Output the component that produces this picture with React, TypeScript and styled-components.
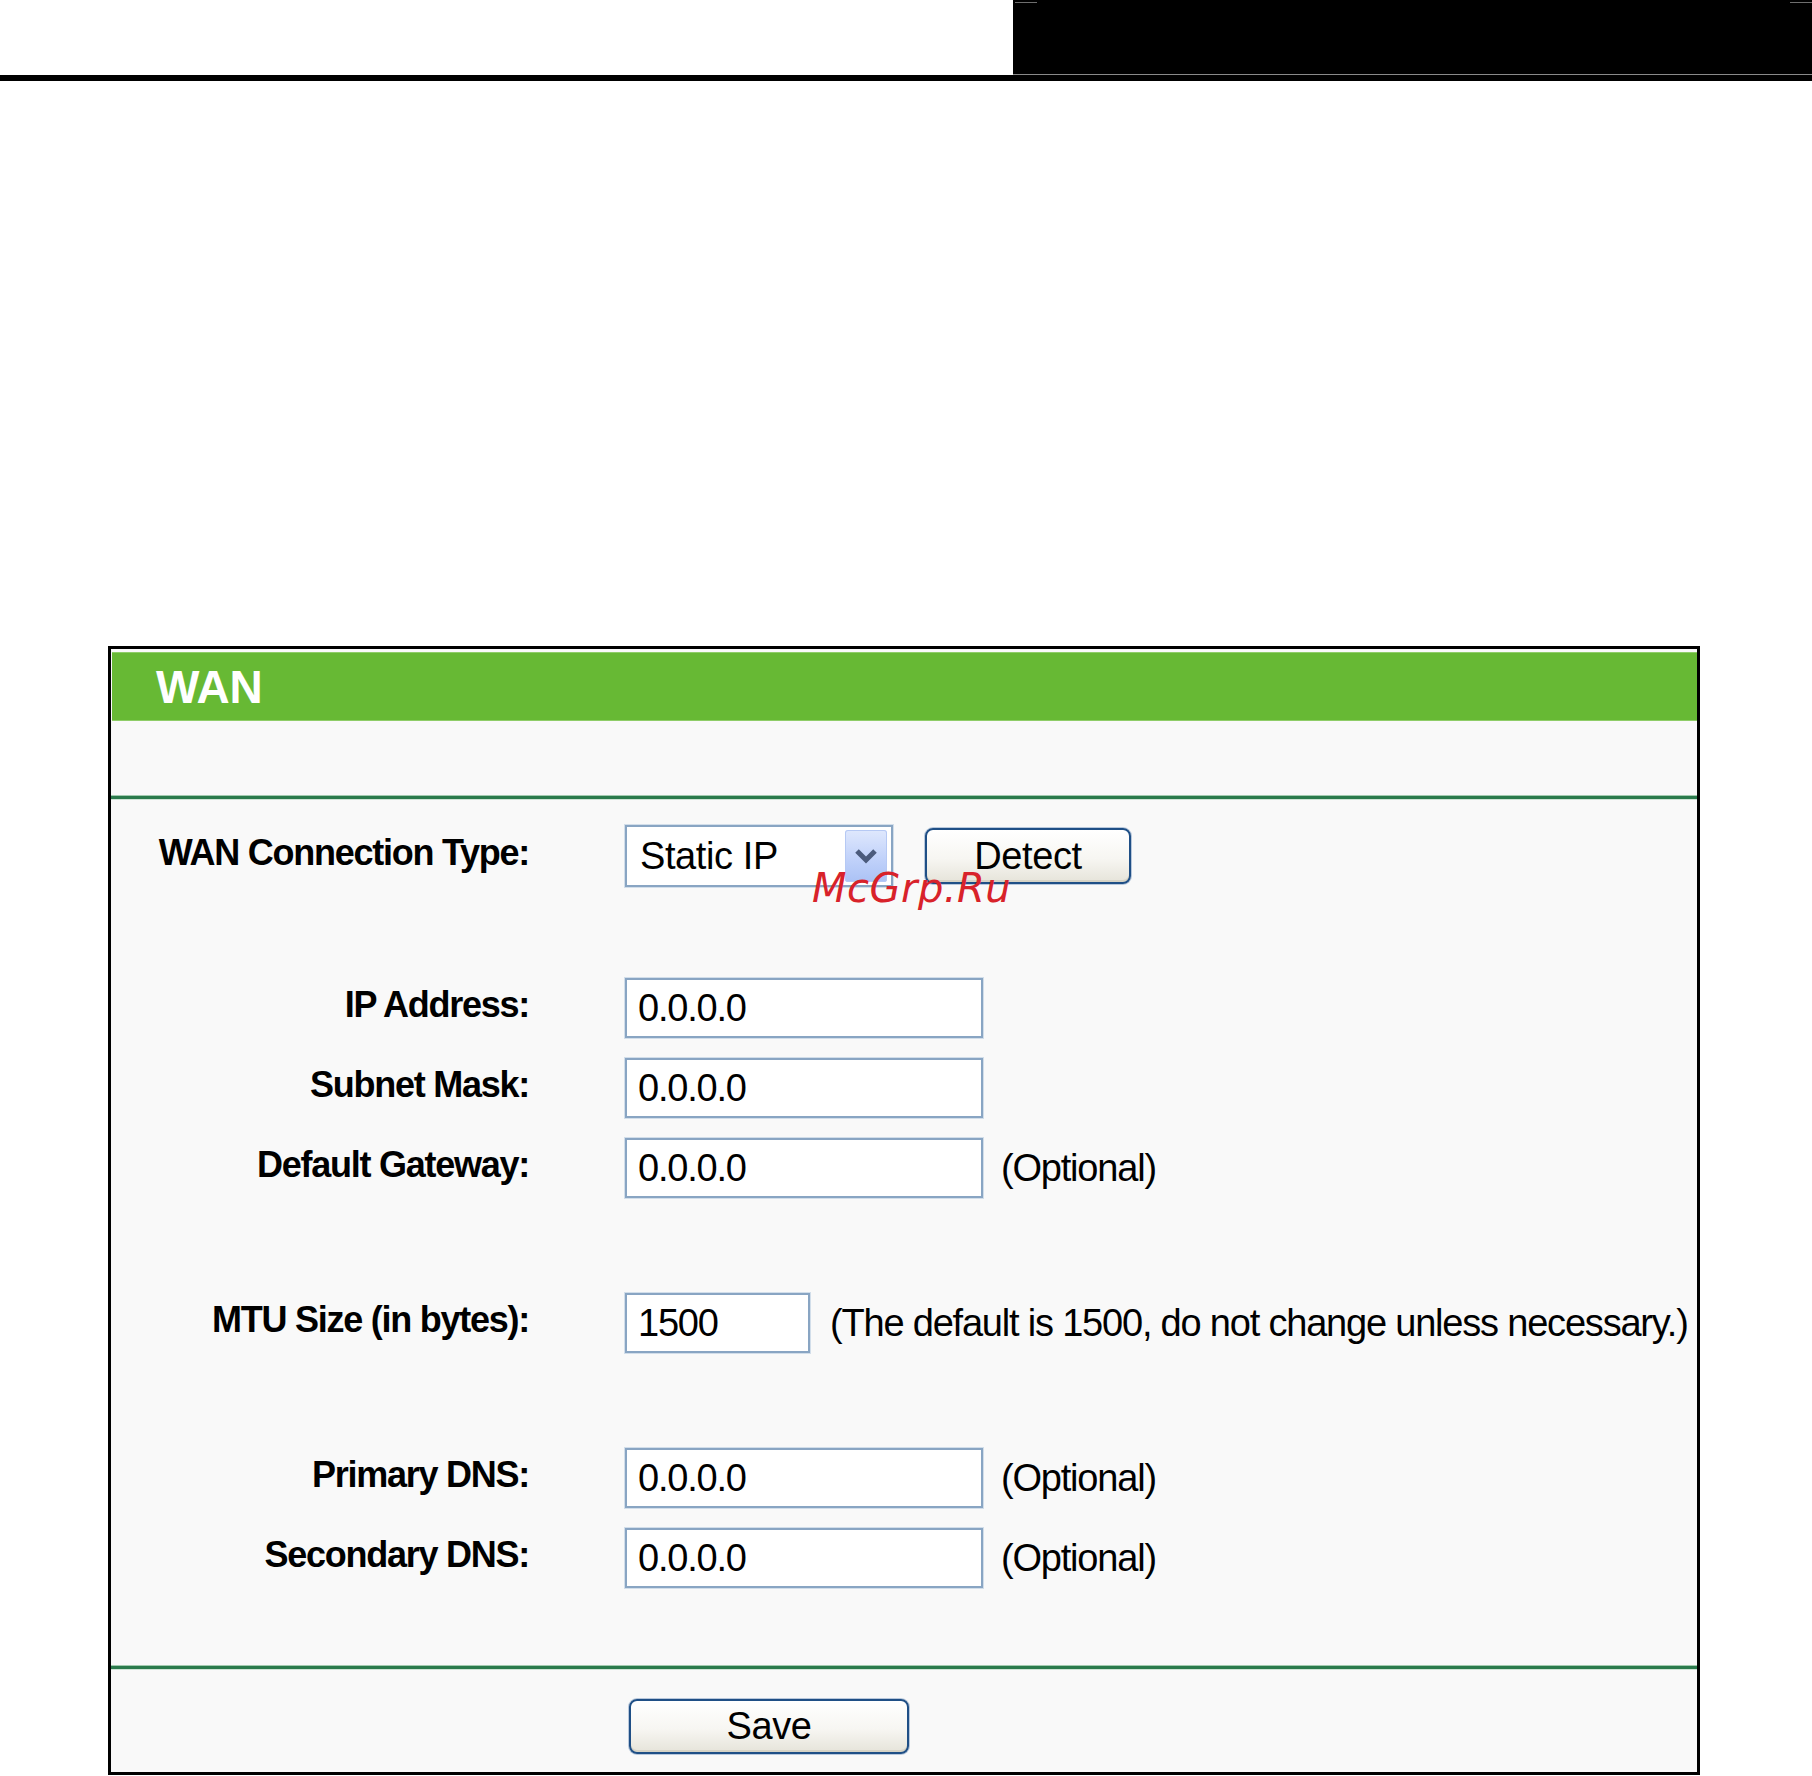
import React from "react";
import styled, { createGlobalStyle } from "styled-components";

const GlobalStyle = createGlobalStyle`
    html, body {
        margin: 0;
        padding: 0;
        background: #ffffff;
    }
    body {
        font-family: "Liberation Sans", Arial, sans-serif;
        color: #000;
    }
`;

const Page = styled.div`
    width: 1812px;
    height: 1776px;
    overflow: hidden;
    background: #ffffff;
`;

const TopBar = styled.div`
    display: flex;
    height: 75px;
`;

const TopBlank = styled.div`
    width: 1013px;
    background: #ffffff;
`;

const TopBlack = styled.div`
    position: relative;
    flex: 1;
    background: #000;
    box-shadow: inset 0 -1px 0 #8a8a8a;

    &::before,
    &::after {
        content: "";
        position: absolute;
        top: 2px;
        width: 22px;
        height: 1px;
        background: #6e6e6e;
    }
    &::before { left: 2px; }
    &::after { right: 0; }
`;

const TopRule = styled.div`
    height: 6px;
    background: #000;
`;

const Panel = styled.div`
    position: relative;
    box-sizing: border-box;
    margin: 565px 0 0 108px;
    width: 1592px;
    border: 3px solid #000;
    background: #f9f9f9;
    padding-top: 3px;
`;

const Header = styled.div`
    display: flex;
    align-items: center;
    height: 69px;
    margin-left: 1px;
    padding-left: 44px;
    background: #67b934;
    box-shadow: inset 0 1px 0 #8fcd68, inset 0 -1px 0 #8fcd68;
    color: #fff;
    font-family: "Liberation Sans", Arial, sans-serif;
    font-weight: bold;
    font-size: 46px;
    letter-spacing: -0.3px;
`;

const Intro = styled.div`
    height: 74px;
`;

const Divider = styled.div<{ $top?: number }>`
    height: 5px;
    margin-top: ${p => p.$top ?? 0}px;
    background: linear-gradient(#a3cbb0 0, #a3cbb0 1px, #2b7a4c 1px, #2b7a4c 4px, #cfe3d5 4px);
`;

const Form = styled.div`
    padding-top: 25px;
`;

const FormRow = styled.div<{ $top: number; $height?: number }>`
    display: grid;
    grid-template-columns: 418px 1fr;
    column-gap: 96px;
    align-items: center;
    margin-top: ${p => p.$top}px;
    height: ${p => p.$height ?? 60}px;
`;

const Label = styled.div`
    text-align: right;
    padding-bottom: 7px;
    font-family: "Liberation Sans", Arial, sans-serif;
    font-weight: bold;
    font-size: 36px;
    letter-spacing: -1.25px;
    white-space: nowrap;
`;

const Controls = styled.div<{ $gap?: number }>`
    display: flex;
    align-items: center;
    gap: ${p => p.$gap ?? 18}px;
`;

const TextBox = styled.div<{ $width?: number }>`
    box-sizing: border-box;
    display: flex;
    align-items: center;
    width: ${p => p.$width ?? 358}px;
    height: 60px;
    padding-left: 11px;
    background: #fff;
    border: 2px solid #89a5c3;
    box-shadow: 0 0 0 1px #d2deea;
    font-size: 38px;
    letter-spacing: -1.2px;
    white-space: nowrap;
`;

const Note = styled.span`
    font-size: 38px;
    letter-spacing: -1.2px;
    white-space: nowrap;
`;

const SelectBox = styled.div`
    box-sizing: border-box;
    display: flex;
    align-items: center;
    justify-content: space-between;
    width: 268px;
    height: 62px;
    padding: 4px 4px 4px 13px;
    background: #fff;
    border: 2px solid #89a5c3;
    box-shadow: 0 0 0 1px #d2deea;
    font-size: 38px;
    letter-spacing: -0.4px;
`;

const DropButton = styled.div`
    display: flex;
    align-items: center;
    justify-content: center;
    width: 42px;
    height: 52px;
    border-radius: 3px;
    background: linear-gradient(#dfe8fd, #c1d2fa 55%, #abc2f5);
    box-shadow: inset 0 0 0 1px #b6c9f4;
`;

const PushButton = styled.div<{ $width: number; $height: number }>`
    box-sizing: border-box;
    display: flex;
    align-items: center;
    justify-content: center;
    width: ${p => p.$width}px;
    height: ${p => p.$height}px;
    border: 2px solid #1f4f86;
    border-radius: 8px;
    background: linear-gradient(#ffffff 0%, #f7f6f2 55%, #e6e4da 100%);
    box-shadow: inset 0 -2px 0 #d6d3c6, 0 0 0 1px #b8c8dc;
    font-size: 38px;
    letter-spacing: -0.4px;
`;

const Footer = styled.div`
    padding: 29px 0 18px 518px;
`;

const Watermark = styled.div`
    position: absolute;
    left: 701px;
    top: 219px;
    font-family: "DejaVu Sans", sans-serif;
    font-style: italic;
    font-size: 40px;
    line-height: 40px;
    color: #d8222a;
    letter-spacing: 0.5px;
    pointer-events: none;
`;

const Chevron = () => (
    <svg width="24" height="16" viewBox="0 0 24 16">
        <path d="M3 3 L12 12 L21 3" fill="none" stroke="#4b5b7c" strokeWidth="5" strokeLinejoin="miter" />
    </svg>
);

const fields = [
    { label: "IP Address:", value: "0.0.0.0", top: 91 },
    { label: "Subnet Mask:", value: "0.0.0.0", top: 20 },
    { label: "Default Gateway:", value: "0.0.0.0", top: 20, note: "(Optional)" },
];

const dnsFields = [
    { label: "Primary DNS:", value: "0.0.0.0", top: 95, note: "(Optional)" },
    { label: "Secondary DNS:", value: "0.0.0.0", top: 20, note: "(Optional)" },
];

export default function App() {
    return (
        <Page>
            <GlobalStyle />
            <TopBar>
                <TopBlank />
                <TopBlack />
            </TopBar>
            <TopRule />
            <Panel>
                <Header>WAN</Header>
                <Intro />
                <Divider />
                <Form>
                    <FormRow $top={0} $height={62}>
                        <Label>WAN Connection Type:</Label>
                        <Controls $gap={32}>
                            <SelectBox>
                                <span>Static IP</span>
                                <DropButton><Chevron /></DropButton>
                            </SelectBox>
                            <PushButton $width={206} $height={56}>Detect</PushButton>
                        </Controls>
                    </FormRow>
                    {fields.map(f => (
                        <FormRow key={f.label} $top={f.top}>
                            <Label>{f.label}</Label>
                            <Controls>
                                <TextBox>{f.value}</TextBox>
                                {f.note && <Note>{f.note}</Note>}
                            </Controls>
                        </FormRow>
                    ))}
                    <FormRow $top={95}>
                        <Label>MTU Size (in bytes):</Label>
                        <Controls $gap={20}>
                            <TextBox $width={185}>1500</TextBox>
                            <Note>(The default is 1500, do not change unless necessary.)</Note>
                        </Controls>
                    </FormRow>
                    {dnsFields.map(f => (
                        <FormRow key={f.label} $top={f.top}>
                            <Label>{f.label}</Label>
                            <Controls>
                                <TextBox>{f.value}</TextBox>
                                <Note>{f.note}</Note>
                            </Controls>
                        </FormRow>
                    ))}
                </Form>
                <Divider $top={77} />
                <Footer>
                    <PushButton $width={280} $height={55}>Save</PushButton>
                </Footer>
                <Watermark>McGrp.Ru</Watermark>
            </Panel>
        </Page>
    );
}
